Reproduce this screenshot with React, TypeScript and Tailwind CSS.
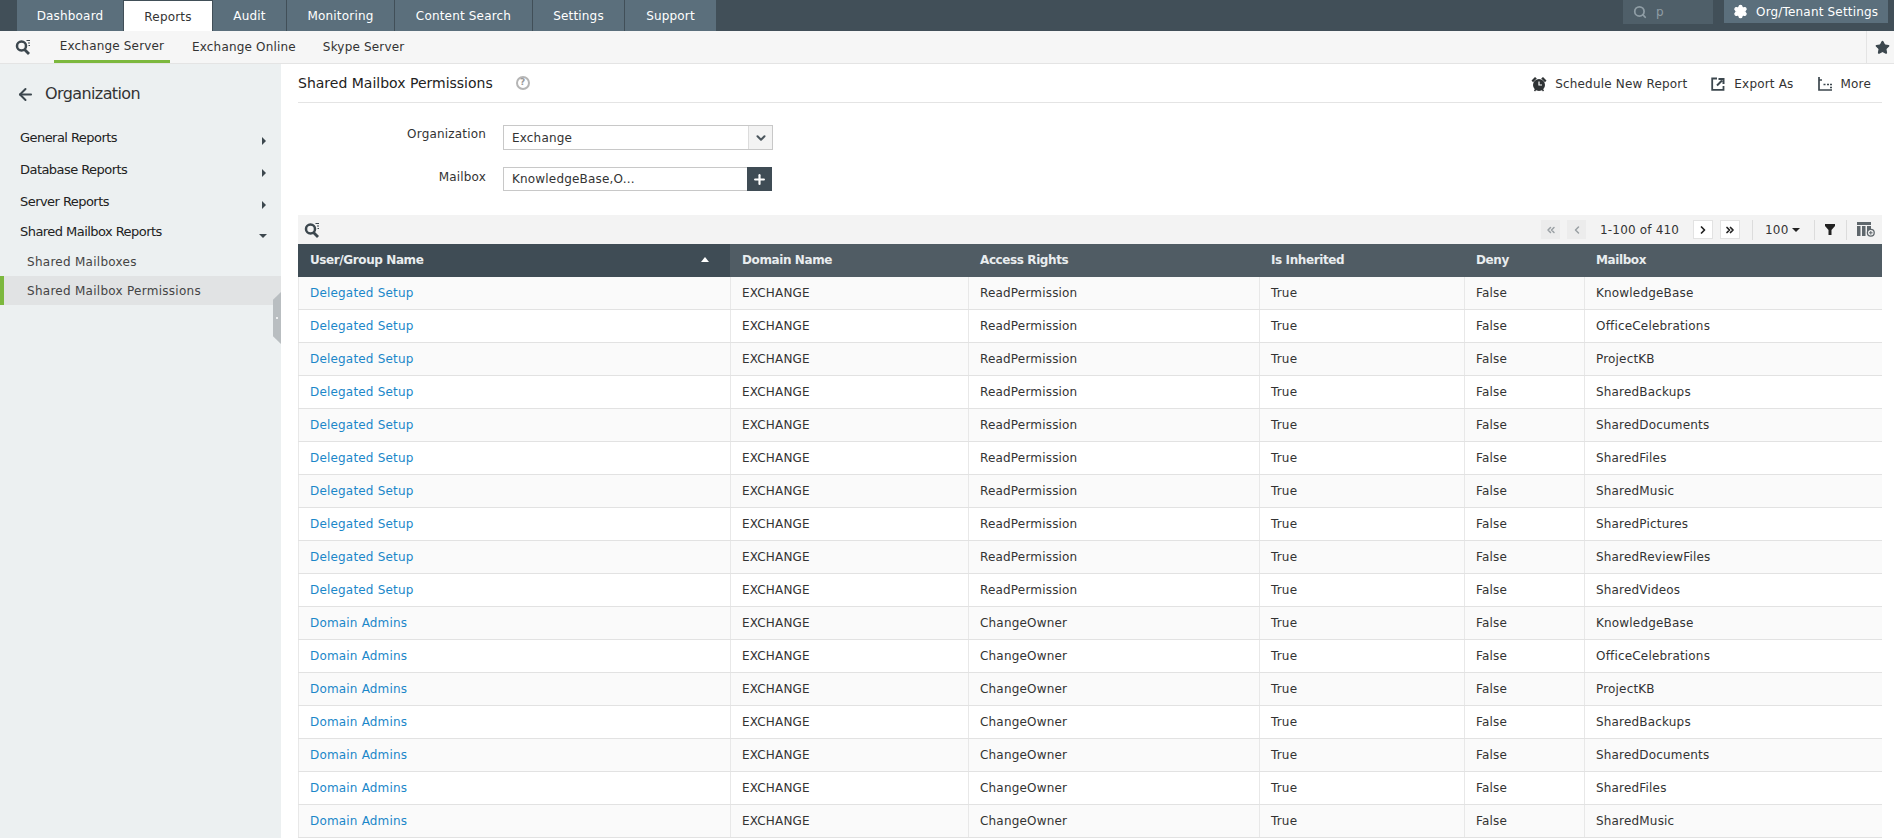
import { ArrowLeft, ChevronDown, ChevronLeft, ChevronRight, ChevronsLeft, ChevronsRight, Plus, Search, Settings, Star } from "lucide-react";

const tabs = [
  { label: "Dashboard", w: "w-[106px]" },
  { label: "Reports", w: "w-[88px]", active: true },
  { label: "Audit", w: "w-[73px]" },
  { label: "Monitoring", w: "w-[107px]" },
  { label: "Content Search", w: "w-[137px]" },
  { label: "Settings", w: "w-[91px]" },
  { label: "Support", w: "w-[91px]" },
];

const mailboxes = [
  "KnowledgeBase",
  "OfficeCelebrations",
  "ProjectKB",
  "SharedBackups",
  "SharedDocuments",
  "SharedFiles",
  "SharedMusic",
  "SharedPictures",
  "SharedReviewFiles",
  "SharedVideos",
];

const rows = [
  ...mailboxes.map((m) => ({ name: "Delegated Setup", right: "ReadPermission", mailbox: m })),
  ...mailboxes.slice(0, 7).map((m) => ({ name: "Domain Admins", right: "ChangeOwner", mailbox: m })),
];

const columns = "grid grid-cols-[432px_238px_291px_205px_120px_298px]";

// magnifier with the small filter lines, used in the sub nav and over the table
function SearchFilterIcon() {
  return (
    <svg width="16" height="16" viewBox="0 0 16 16" fill="none" className="text-[#3c474e]">
      <circle cx="6.5" cy="7" r="4.5" stroke="currentColor" strokeWidth="2.5" />
      <path d="M9.5 10.5l4.5 4.5" stroke="currentColor" strokeWidth="2.8" />
      <path d="M11.5 1.5h3.5M13 4h2M13.5 6.5h1.5" stroke="currentColor" strokeWidth="1" />
    </svg>
  );
}

function AlarmIcon() {
  return (
    <svg width="16" height="16" viewBox="0 0 16 16" className="text-[#2f3335]">
      <circle cx="8" cy="9" r="6" fill="currentColor" />
      <path d="M0.5 4.5L4 1 5.8 2.6 2 6.2zM15.5 4.5L12 1 10.2 2.6 14 6.2z" fill="currentColor" />
      <path d="M3.5 15l1.5-2M12.5 15l-1.5-2" stroke="currentColor" strokeWidth="1.4" />
      <path d="M8 5.5V9h3" stroke="#fff" strokeWidth="1.2" fill="none" />
    </svg>
  );
}

function ExportIcon() {
  return (
    <svg width="14" height="14" viewBox="0 0 14 14" fill="none" className="text-[#3c474e]">
      <path d="M6 1.5H1.2v11.3h11.3V9" stroke="currentColor" strokeWidth="1.8" />
      <path d="M6 8.5l5-5M7.5 2h5v5" stroke="currentColor" strokeWidth="2" />
    </svg>
  );
}

function MoreIcon() {
  return (
    <svg width="14" height="14" viewBox="0 0 14 14" fill="none" className="text-[#3c474e]">
      <path d="M1 0v13h13" stroke="currentColor" strokeWidth="1.7" />
      <path d="M1 3h3" stroke="currentColor" strokeWidth="1.5" />
      <path d="M5.5 7.5h2M9 7.5h2M12 7.5h2M12 10.5h2" stroke="currentColor" strokeWidth="1.6" />
    </svg>
  );
}

function ColumnsIcon() {
  return (
    <svg width="18" height="15" viewBox="0 0 18 15" className="text-[#5f676c]">
      <path d="M0 0h14v3H0z" fill="currentColor" />
      <path d="M0 4h3.5v10H0zM5 4h3.5v10H5zM10 4h4v5h-4z" fill="currentColor" />
      <circle cx="13.8" cy="10.8" r="3.4" fill="#f3f3f3" stroke="currentColor" strokeWidth="1.3" />
      <path d="M12 10.8h3.6M13.8 9v3.6" stroke="currentColor" strokeWidth="1" />
    </svg>
  );
}

function Caret({ open }: { open?: boolean }) {
  return open ? (
    <span className="mt-[7px] h-0 w-0 border-x-[4px] border-t-[4px] border-x-transparent border-t-[#3c474e]" />
  ) : (
    <span className="mt-[6px] mr-px h-0 w-0 border-y-[4px] border-l-[4px] border-y-transparent border-l-[#3c474e]" />
  );
}

function PagerButton({ children, off, w }: { children: React.ReactNode; off?: boolean; w: string }) {
  return (
    <span className={`flex h-[19px] ${w} items-center justify-center border ${off ? "border-[#ececec] bg-[#ececec] text-[#9aa0a4]" : "border-[#e2e2e2] bg-white text-[#222]"}`}>
      {children}
    </span>
  );
}

export default function App() {
  return (
    <div className="flex h-[838px] w-[1894px] flex-col overflow-hidden bg-white text-[12px] tracking-[0.18px] text-[#333] [font-family:'DejaVu_Sans',Verdana,sans-serif]">
      {/* top nav */}
      <div className="flex h-[31px] shrink-0 items-start justify-between bg-[#414f58] pl-[17px] pr-[6px]">
        <div className="flex h-[31px] gap-px">
          {tabs.map((t) => (
            <div
              key={t.label}
              className={`flex h-[31px] items-center justify-center ${t.w} ${t.active ? "mt-px bg-white text-[#333]" : "bg-[#5b6f7c] text-white"}`}
            >
              {t.label}
            </div>
          ))}
        </div>
        <div className="flex gap-[11px]">
          <div className="flex h-[24px] w-[90px] items-center gap-[9px] bg-[#4f5f69] pl-[10px] text-[#8f9da5]">
            <Search size={14} strokeWidth={3} />
            <span>p</span>
          </div>
          <div className="flex h-[23px] w-[164px] items-center gap-[8px] bg-[#5b6f7c] pl-[9px] text-white">
            <Settings size={15} fill="currentColor" stroke="currentColor" />
            <span>Org/Tenant Settings</span>
          </div>
        </div>
      </div>

      {/* sub nav */}
      <div className="flex h-[33px] shrink-0 items-center border-b border-[#e4e4e4] bg-[#f6f6f6]">
        <div className="flex w-[54px] pl-[15px]">
          <SearchFilterIcon />
        </div>
        <div className="flex h-full">
          <div className="flex h-full w-[116px] items-center justify-center border-b-[3px] border-[#7cb83e] pt-[1px]">Exchange Server</div>
          <div className="flex h-full items-center pl-[22px]">Exchange Online</div>
          <div className="flex h-full items-center pl-[27px]">Skype Server</div>
        </div>
        <div className="ml-auto flex h-full w-[28px] items-center justify-center border-l border-[#e4e4e4] pl-[3px]">
          <Star size={15} fill="#3c474e" stroke="#3c474e" />
        </div>
      </div>

      <div className="flex min-h-0 flex-1">
        {/* left menu */}
        <aside className="relative w-[281px] shrink-0 bg-[#ecf0f1]">
          <div className="flex h-[48px] items-center gap-[10px] pl-[16px] pt-[12px] text-[16px] tracking-[-0.6px] text-[#333]">
            <ArrowLeft size={19} strokeWidth={2.5} className="text-[#3c474e]" />
            Organization
          </div>
          <div className="mt-[10px] flex flex-col text-[13px] font-medium tracking-[-0.55px] text-[#222]">
            {[
              { label: "General Reports", h: "h-[32px]" },
              { label: "Database Reports", h: "h-[32px]" },
              { label: "Server Reports", h: "h-[31px]" },
              { label: "Shared Mailbox Reports", h: "h-[30px]", open: true },
            ].map((g) => (
              <div key={g.label} className={`flex ${g.h} items-center justify-between pl-[20px] pr-[14px]`}>
                {g.label}
                <Caret open={g.open} />
              </div>
            ))}
          </div>
          <div className="tracking-[0.27px] text-[#444]">
            <div className="flex h-[29px] items-center pl-[27px]">Shared Mailboxes</div>
            <div className="flex h-[29px] items-center border-l-[4px] border-[#7cb83e] bg-[#e1e3e4] pl-[23px]">Shared Mailbox Permissions</div>
          </div>
          {/* collapse handle */}
          <div className="absolute right-0 top-[228px] flex h-[52px] w-[8px] items-center justify-center bg-[#b9bec1] [clip-path:polygon(100%_0,100%_100%,0_85%,0_15%)]">
            <span className="h-[2px] w-[2px] rounded-full bg-white" />
          </div>
        </aside>

        {/* report */}
        <main className="min-w-0 flex-1 pl-[17px] pr-[12px]">
          <div className="flex h-[39px] items-center justify-between border-b border-[#e4e4e4]">
            <div className="flex items-center gap-[23px]">
              <h1 className="text-[14px] font-medium tracking-[0px] text-[#222]">Shared Mailbox Permissions</h1>
              <span className="flex h-[14px] w-[14px] items-center justify-center rounded-full border-2 border-[#b5b5b5] text-[9px] font-bold text-[#999]">?</span>
            </div>
            <div className="flex items-center pr-[11px] pt-[2px]">
              <span className="flex items-center gap-[8px]"><AlarmIcon />Schedule New Report</span>
              <span className="ml-[24px] flex items-center gap-[9px]"><ExportIcon />Export As</span>
              <span className="ml-[24px] flex items-center gap-[9px]"><MoreIcon />More</span>
            </div>
          </div>

          {/* filters */}
          <div className="flex h-[112px] flex-col pt-[22px]">
            <div className="flex items-start">
              <div className="w-[188px] text-right">Organization</div>
              <div className="ml-[17px] flex h-[25px] w-[270px] border border-[#c8c8c8]">
                <span className="flex flex-1 items-center pl-[8px]">Exchange</span>
                <span className="flex w-[24px] items-center justify-center border-l border-[#dcdcdc] bg-[#f3f3f3] text-[#4b565d]">
                  <ChevronDown size={14} strokeWidth={3.5} />
                </span>
              </div>
            </div>
            <div className="mt-[17px] flex items-start">
              <div className="w-[188px] pt-px text-right">Mailbox</div>
              <div className="ml-[17px] flex h-[24px] w-[269px] border border-[#c8c8c8]">
                <span className="flex flex-1 items-center pb-px pl-[8px]">KnowledgeBase,O...</span>
                <span className="-my-px -mr-px flex w-[25px] items-center justify-center bg-[#3f4c55] text-white">
                  <Plus size={15} strokeWidth={3.5} />
                </span>
              </div>
            </div>
          </div>

          {/* table toolbar */}
          <div className="flex h-[29px] items-center justify-between bg-[#f3f3f3] pl-[6px] pr-[7px]">
            <SearchFilterIcon />
            <div className="flex items-center">
              <PagerButton off w="w-[19px]"><ChevronsLeft size={12} strokeWidth={3} /></PagerButton>
              <span className="ml-[7px]"><PagerButton off w="w-[19px]"><ChevronLeft size={12} strokeWidth={3} /></PagerButton></span>
              <span className="ml-[14px] w-[79px] whitespace-nowrap">1-100 of 410</span>
              <span className="ml-[14px]"><PagerButton w="w-[20px]"><ChevronRight size={12} strokeWidth={3.5} /></PagerButton></span>
              <span className="ml-[7px]"><PagerButton w="w-[20px]"><ChevronsRight size={12} strokeWidth={3.5} /></PagerButton></span>
              <span className="ml-[12px] h-[20px] border-l border-[#dcdcdc]" />
              <span className="ml-[12px] flex w-[35px] items-center justify-between">100<span className="h-0 w-0 border-x-[4px] border-t-[4px] border-x-transparent border-t-[#222]" /></span>
              <span className="ml-[14px] h-[20px] border-l border-[#dcdcdc]" />
              <svg width="10" height="11" viewBox="0 0 10 11" className="ml-[10px] text-[#222]"><path d="M0 0h10v2L6.5 6v5h-3V6L0 2z" fill="currentColor" /></svg>
              <span className="ml-[11px] h-[20px] border-l border-[#dcdcdc]" />
              <span className="ml-[10px] flex"><ColumnsIcon /></span>
            </div>
          </div>

          {/* table */}
          <div className={`${columns} h-[33px] bg-[#505c64] pb-[2px] font-bold tracking-[-0.4px] text-[#e9edef]`}>
            <div className="-mb-[2px] flex items-center justify-between bg-[#3f4c55] pb-[2px] pl-[12px] pr-[21px]">
              User/Group Name
              <span className="h-0 w-0 border-x-[4px] border-b-[5px] border-x-transparent border-b-white" />
            </div>
            {["Domain Name", "Access Rights", "Is Inherited", "Deny", "Mailbox"].map((h) => (
              <div key={h} className="flex items-center pl-[12px]">{h}</div>
            ))}
          </div>
          {rows.map((r, i) => (
            <div key={i} className={`${columns} h-[33px] border-b border-[#e2e2e2] ${i % 2 === 0 ? "bg-[#fafafa]" : "bg-white"}`}>
              <div className="flex items-center border-l border-[#e8e8e8] pl-[11px] text-[#1b87c9]">{r.name}</div>
              {["EXCHANGE", r.right, "True", "False", r.mailbox].map((c, j) => (
                <div key={j} className="flex items-center border-l border-[#e8e8e8] pl-[11px]">{c}</div>
              ))}
            </div>
          ))}
        </main>
      </div>
    </div>
  );
}
